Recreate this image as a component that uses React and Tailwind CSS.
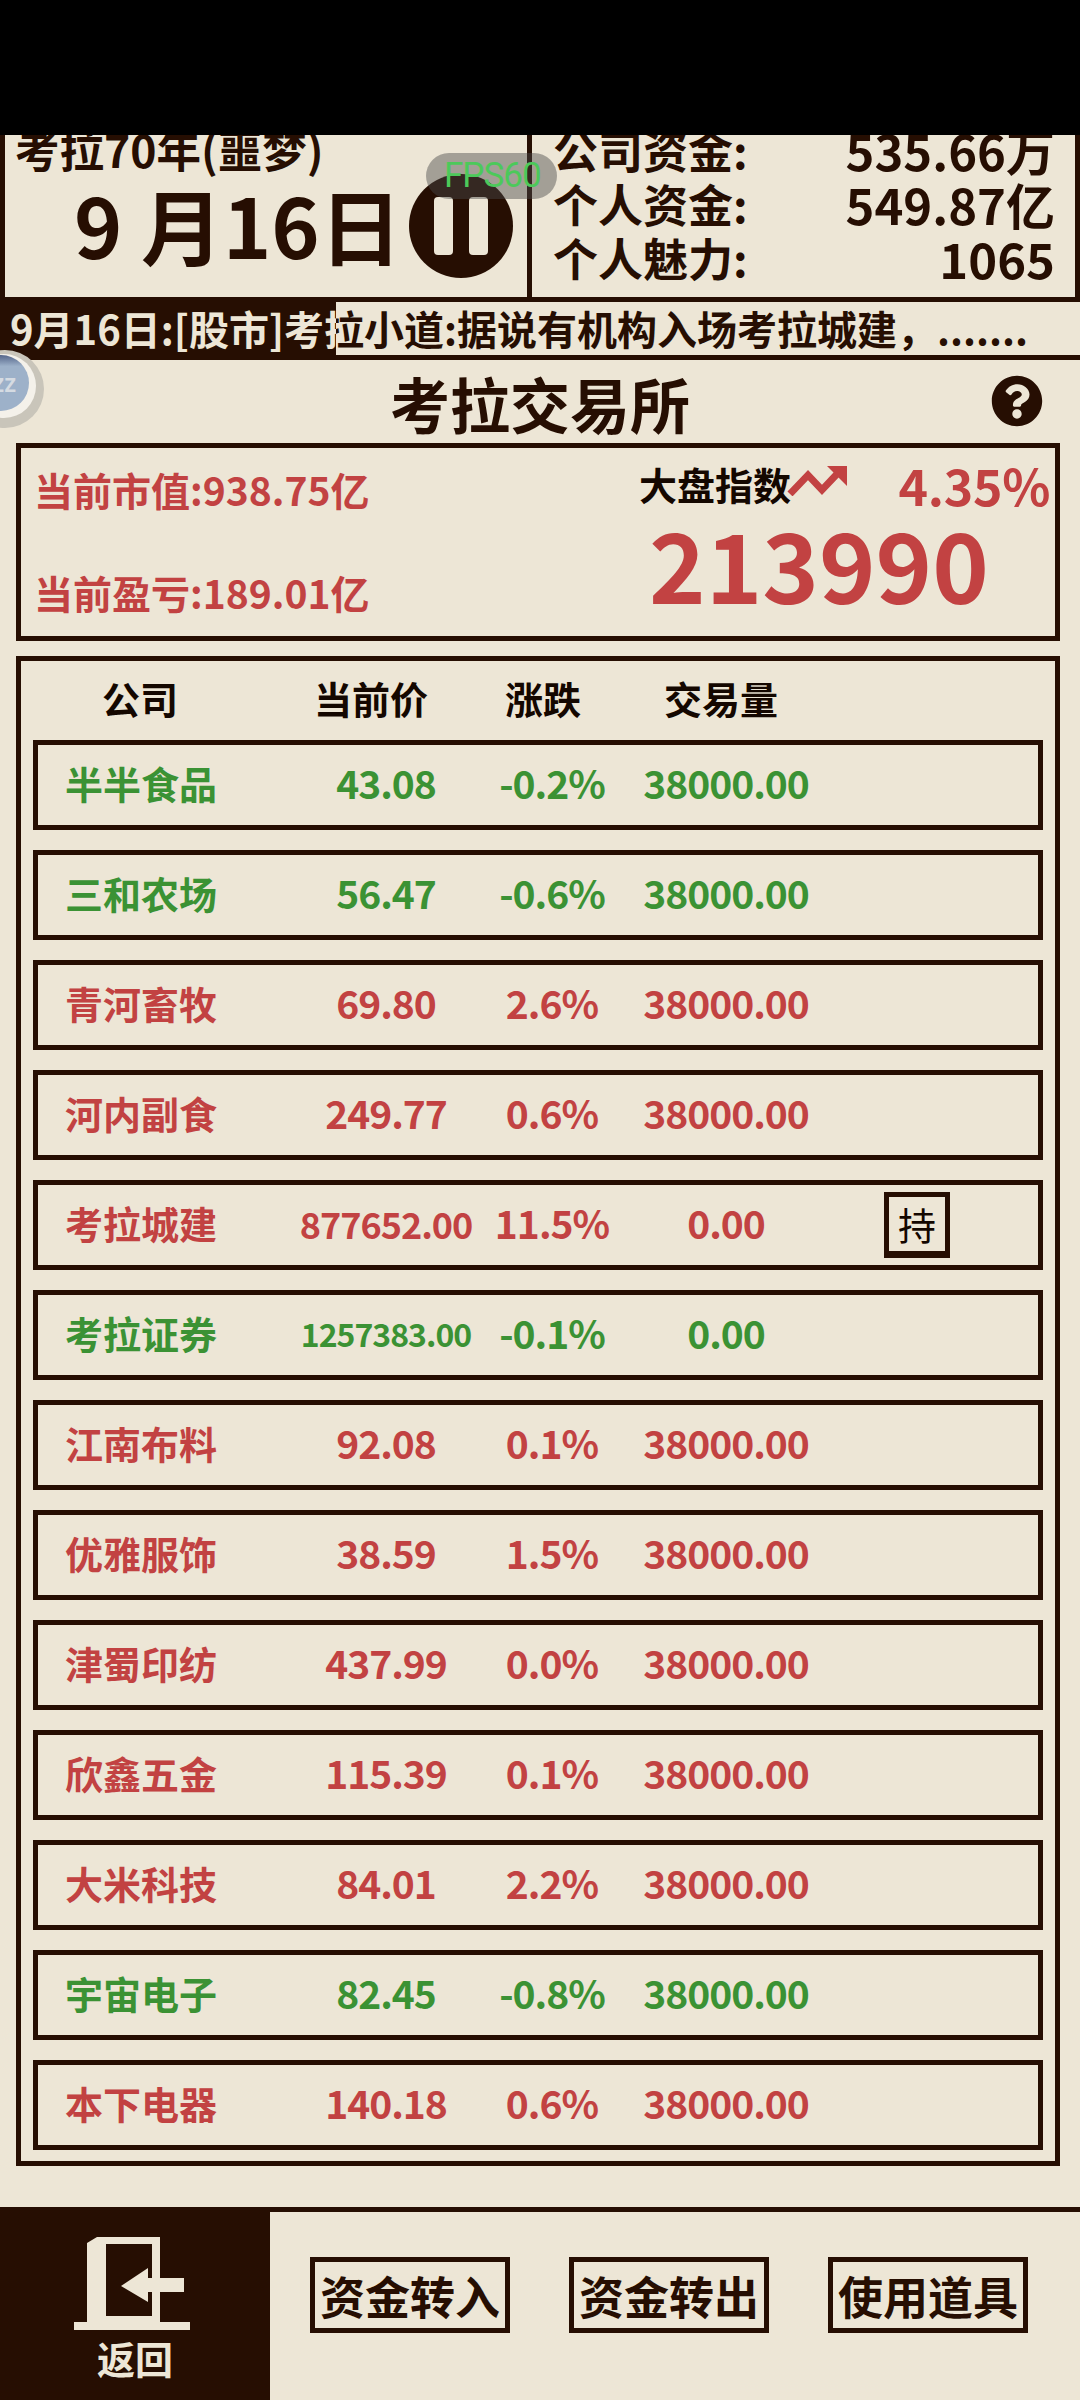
import React from 'react';
import { FaQuestionCircle } from 'react-icons/fa';

const RED = 'text-[#c24242]';
const GREEN = 'text-[#3b9234]';

const stocks = [
  { name: '半半食品', price: '43.08', change: '-0.2%', volume: '38000.00', up: false },
  { name: '三和农场', price: '56.47', change: '-0.6%', volume: '38000.00', up: false },
  { name: '青河畜牧', price: '69.80', change: '2.6%', volume: '38000.00', up: true },
  { name: '河内副食', price: '249.77', change: '0.6%', volume: '38000.00', up: true },
  { name: '考拉城建', price: '877652.00', change: '11.5%', volume: '0.00', up: true, held: true, priceSize: 'text-[36px]' },
  { name: '考拉证券', price: '1257383.00', change: '-0.1%', volume: '0.00', up: false, priceSize: 'text-[32px]' },
  { name: '江南布料', price: '92.08', change: '0.1%', volume: '38000.00', up: true },
  { name: '优雅服饰', price: '38.59', change: '1.5%', volume: '38000.00', up: true },
  { name: '津蜀印纺', price: '437.99', change: '0.0%', volume: '38000.00', up: true },
  { name: '欣鑫五金', price: '115.39', change: '0.1%', volume: '38000.00', up: true },
  { name: '大米科技', price: '84.01', change: '2.2%', volume: '38000.00', up: true },
  { name: '宇宙电子', price: '82.45', change: '-0.8%', volume: '38000.00', up: false },
  { name: '本下电器', price: '140.18', change: '0.6%', volume: '38000.00', up: true },
];

const TICKER = '9月16日:[股市]考拉小道:据说有机构入场考拉城建，.......';

function StatLine({ label, value }) {
  return (
    <div className="flex justify-between items-center h-[54px] font-bold">
      <span className="text-[45px]">{label}</span>
      <span className="text-[49px]">{value}</span>
    </div>
  );
}

function StockRow({ stock }) {
  const color = stock.up ? RED : GREEN;
  return (
    <div className={`grid grid-cols-[252px_192px_140px_208px_1fr] items-center h-[90px] border-[5px] border-[#260e02] ${color} font-bold`}>
      <span className="pl-[27px] text-[38px] leading-none -mt-[5px]">{stock.name}</span>
      <span className={`text-center leading-none -mt-[5px] tracking-[-1px] ${stock.priceSize || 'text-[39px]'}`}>{stock.price}</span>
      <span className="text-center text-[39px] leading-none -mt-[5px] tracking-[-1px]">{stock.change}</span>
      <span className="text-center text-[39px] leading-none -mt-[5px] tracking-[-1px]">{stock.volume}</span>
      {stock.held && (
        <span className="ml-[54px] w-[66px] h-[66px] flex items-center justify-center border-[5px] border-b-[7px] border-[#260e02] text-[38px] font-normal text-[#140700] leading-none">持</span>
      )}
    </div>
  );
}

function ActionButton({ label }) {
  return (
    <button className="w-[200px] h-[76px] flex items-center justify-center border-[5px] border-[#260e02] text-[45px] font-bold leading-none whitespace-nowrap">
      {label}
    </button>
  );
}

export default function App() {
  return (
    <div className="relative w-[1080px] h-[2400px] overflow-hidden flex flex-col bg-[#ede6d6] text-[#260e02] font-['Noto_Sans_CJK_SC','Noto_Sans',sans-serif]">
      <div className="h-[135px] bg-black shrink-0" />

      {/* date and money */}
      <div className="flex h-[167px] shrink-0 border-l-[5px] border-r-[5px] border-b-[5px] border-[#260e02] overflow-hidden">
        <div className="w-[527px] shrink-0 border-r-[5px] border-[#260e02] pl-[10px] overflow-hidden">
          <div className="-mt-[11px] h-[52px] text-[44.5px] font-bold leading-[50px] whitespace-nowrap">考拉70年(噩梦)</div>
          <div className="flex items-center -mt-[2px]">
            <span className="ml-[59px] w-[331px] -mt-[4px] text-[82px] font-bold leading-[88px] whitespace-nowrap">9 月16日</span>
            <span className="ml-[4px] w-[104px] h-[104px] rounded-full bg-[#260e02] flex items-center justify-center gap-[16px] shrink-0">
              <span className="w-[19px] h-[58px] rounded-[4px] bg-[#ede6d6]" />
              <span className="w-[19px] h-[58px] rounded-[4px] bg-[#ede6d6]" />
            </span>
          </div>
        </div>
        <div className="flex-1 pl-[21px] pr-[20px] -mt-[12px]">
          <StatLine label="公司资金:" value="535.66万" />
          <StatLine label="个人资金:" value="549.87亿" />
          <StatLine label="个人魅力:" value="1065" />
        </div>
      </div>

      {/* news ticker */}
      <div className="relative h-[58px] shrink-0 border-b-[5px] border-[#260e02]">
        <div className="pl-[10px] text-[40px] font-bold leading-[53px] whitespace-nowrap">{TICKER}</div>
        <div className="absolute left-0 top-0 w-[336px] h-[57px] bg-[#260e02] text-[#ede6d6] pl-[10px] text-[40px] font-bold leading-[53px] whitespace-nowrap overflow-hidden">{TICKER}</div>
      </div>

      {/* title */}
      <div className="relative h-[83px] shrink-0 flex items-center justify-center">
        <h1 className="text-[60px] font-bold leading-none mt-[3px]">考拉交易所</h1>
        <FaQuestionCircle className="absolute right-[37px] top-[15px] w-[52px] h-[52px]" />
      </div>

      {/* market summary */}
      <div className="ml-[16px] mr-[20px] h-[198px] shrink-0 border-[5px] border-[#260e02] flex">
        <div className={`pl-[13px] flex flex-col ${RED} text-[39px] font-bold leading-none`}>
          <div className="mt-[22px]">当前市值:938.75亿</div>
          <div className="mt-[64px]">当前盈亏:189.01亿</div>
        </div>
        <div className="ml-auto w-[416px] shrink-0">
          <div className="flex items-center mt-[11px] h-[50px]">
            <span className="text-[38px] font-bold leading-none text-[#140700]">大盘指数</span>
            <svg viewBox="0 0 60 32" className="w-[60px] h-[32px] -ml-[4px] mb-[8px]" fill="none">
              <polyline points="3,30 21,11 35,26 50,10" stroke="#c24242" strokeWidth="7" />
              <polygon points="40,2 60,2 60,22" fill="#c24242" />
            </svg>
            <span className={`ml-auto mr-[5px] text-[50px] font-bold leading-none tracking-[-0.3px] ${RED}`}>4.35%</span>
          </div>
          <div className={`ml-[10px] mt-[4px] text-[96px] font-bold leading-[100px] ${RED}`}>213990</div>
        </div>
      </div>

      {/* stock table */}
      <div className="ml-[16px] mr-[20px] mt-[15px] shrink-0 border-[5px] border-[#260e02] px-[12px] pb-[11px]">
        <div className="grid grid-cols-[238px_224px_120px_236px] -ml-[12px] h-[79px] items-center text-[38px] font-bold leading-none text-[#140700] text-center">
          <span className="-mt-[6px]">公司</span>
          <span className="-mt-[6px]">当前价</span>
          <span className="-mt-[6px]">涨跌</span>
          <span className="-mt-[6px]">交易量</span>
        </div>
        <div className="flex flex-col gap-[20px]">
          {stocks.map(s => <StockRow key={s.name} stock={s} />)}
        </div>
      </div>

      {/* bottom actions */}
      <div className="mt-[41px] flex-1 flex border-t-[5px] border-[#260e02]">
        <div className="w-[270px] -mt-[5px] bg-[#260e02] flex flex-col items-center text-[#ede6d6]">
          <svg viewBox="0 0 116 93" className="w-[116px] h-[93px] mt-[30px] -ml-[6px]" fill="#ede6d6">
            <path fillRule="evenodd" d="M13 85V6L23 0H86V85ZM32 7V79H78V7Z" />
            <rect x="0" y="85" width="116" height="8" />
            <polygon points="47,49 74,31 74,65" />
            <rect x="74" y="41" width="36" height="14" />
          </svg>
          <span className="mt-[9px] text-[38px] font-bold leading-none">返回</span>
        </div>
        <div className="flex-1 flex items-start gap-[59px] pt-[45px] pl-[40px]">
          <ActionButton label="资金转入" />
          <ActionButton label="资金转出" />
          <ActionButton label="使用道具" />
        </div>
      </div>

      {/* floating assistant bubble */}
      <div className="absolute left-[-34px] top-[350px] w-[78px] h-[78px] rounded-full bg-[#c9c5ba]">
        <div className="absolute left-[6px] top-[4px] w-[64px] h-[64px] rounded-full bg-[#f4f1ea]">
          <div className="absolute left-[1px] top-[1px] w-[56px] h-[56px] rounded-full bg-linear-to-b from-[#55668a] from-0% to-[#9db1c9] to-20% flex items-center justify-end pr-[13px] pt-[4px] text-[20px] font-bold text-[#d5dbe2] leading-none font-['DejaVu_Sans_Mono',monospace]">ZZ</div>
        </div>
      </div>

      {/* frame rate overlay */}
      <div className="absolute left-[426px] top-[153px] w-[131px] h-[46px] rounded-full bg-[#4a4a4a]/45 pl-[18px] text-[35px] tracking-[-1px] text-[#4cc95a] leading-[46px] font-['Roboto',sans-serif]">FPS60</div>
    </div>
  );
}
